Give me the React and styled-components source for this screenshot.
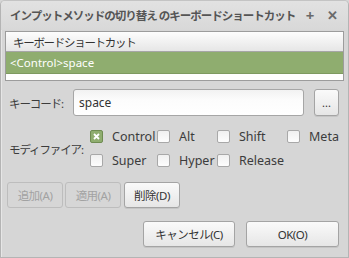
import React from "react";
import styled, { createGlobalStyle } from "styled-components";

const GlobalStyle = createGlobalStyle`
  html, body {
    margin: 0;
    padding: 0;
    background: #d6d6d6;
  }
  * {
    box-sizing: border-box;
  }
`;

const Window = styled.div`
  width: 349px;
  height: 258px;
  background: #d6d6d6;
  border: 1px solid #b4b4b4;
  border-top-color: #c4c4c4;
  border-radius: 5px 5px 0 0;
  box-shadow: inset 1px 1px 0 #e6e6e6;
  font-family: "Noto Sans", "Noto Sans CJK JP", sans-serif;
  font-size: 12px;
  color: #3c3c3c;
  display: flex;
  flex-direction: column;
`;

const TitleBar = styled.div`
  height: 29px;
  display: flex;
  align-items: center;
  padding: 0 6px 2px 9px;
  background: linear-gradient(#e2e2e2, #d8d8d8);
  border-radius: 4px 4px 0 0;
`;

const Title = styled.div`
  flex: 1;
  font-weight: bold;
  font-size: 11.5px;
  letter-spacing: -1px;
  color: #555;
  white-space: nowrap;
  overflow: hidden;
`;

const TitleButton = styled.span`
  width: 20px;
  text-align: center;
  color: #6a6a6a;
  font-weight: bold;
  font-size: ${(p) => p.size || 14}px;
  margin-left: 2px;
`;

const Body = styled.div`
  flex: 1;
  display: flex;
  flex-direction: column;
  padding: 1px 4px 0 4px;
`;

const ListBox = styled.div`
  height: 50px;
  border: 1px solid #9c9c9c;
  background: #fff;
  display: flex;
  flex-direction: column;
`;

const ListHeader = styled.div`
  height: 20px;
  display: flex;
  align-items: center;
  padding-left: 7px;
  background: linear-gradient(#fdfdfd, #e6e6e6);
  border-bottom: 1px solid #a6a6a6;
  color: #333;
  font-size: 11.5px;
  letter-spacing: -1.3px;
`;

const ListRow = styled.div`
  height: 22px;
  display: flex;
  align-items: center;
  padding-left: 4px;
  background: ${(p) => (p.selected ? "#8fad6f" : "#fff")};
  color: ${(p) => (p.selected ? "#fff" : "#333")};
  border-bottom: ${(p) => (p.selected ? "1px solid #7e9a60" : "none")};
  font-size: 11.5px;
`;

const FieldRow = styled.div`
  display: flex;
  align-items: center;
  margin-top: 8px;
  height: 27px;
`;

const Label = styled.div`
  width: 68px;
  padding-left: 4px;
  color: #3c3c3c;
  white-space: nowrap;
  font-size: 11.5px;
  letter-spacing: -1.1px;
`;

const TextInput = styled.div`
  width: 231px;
  height: 27px;
  border: 1px solid #a6a6a6;
  border-radius: 3px;
  background: linear-gradient(#f2f2f2, #fcfcfc 40%, #fff);
  display: flex;
  align-items: center;
  padding-left: 5px;
  font-size: 12px;
  color: #333;
`;

const Button = styled.button`
  font-family: inherit;
  font-size: 11.5px;
  letter-spacing: -0.5px;
  height: ${(p) => p.h || 26}px;
  width: ${(p) => p.w}px;
  border-radius: 3px;
  padding: 0;
  border: 1px solid ${(p) => (p.disabled ? "#bdbdbd" : "#a4a4a4")};
  background: ${(p) =>
    p.disabled ? "#d6d6d6" : "linear-gradient(#fafafa, #e6e6e6)"};
  color: ${(p) => (p.disabled ? "#a2a2a2" : "#333")};
  box-shadow: ${(p) => (p.disabled ? "none" : "0 1px 0 rgba(0,0,0,0.08)")};
`;

const MoreButton = styled(Button)`
  margin-left: 10px;
  font-size: 11px;
  letter-spacing: 0;
`;

const ModRow = styled.div`
  display: flex;
  align-items: center;
  margin-top: 11px;
`;

const CheckGrid = styled.div`
  display: grid;
  grid-template-columns: 67px 60px 70px 60px;
  row-gap: 5px;
  margin-left: 17px;
`;

const CheckItem = styled.label`
  display: flex;
  align-items: center;
  height: 19px;
  font-size: 12.5px;
  color: #3c3c3c;
  white-space: nowrap;
`;

const Box = styled.span`
  width: 13px;
  height: 13px;
  border-radius: 2px;
  margin-right: 9px;
  display: flex;
  align-items: center;
  justify-content: center;
  border: 1px solid ${(p) => (p.checked ? "#6f8c52" : "#a8a8a8")};
  background: ${(p) =>
    p.checked ? "#8fad6f" : "linear-gradient(#f0f0f0, #fdfdfd)"};
`;

const ActionRow = styled.div`
  display: flex;
  gap: 2px;
  margin-top: 12px;
  margin-left: 2px;
`;

const DeleteButton = styled(Button)`
  margin-left: 1px;
`;

const DialogButtons = styled.div`
  display: flex;
  justify-content: flex-end;
  gap: 11px;
  margin-top: 13px;
  padding-right: 5px;
`;

const CheckMark = () => (
  <svg width="7" height="7" viewBox="0 0 7 7">
    <path d="M1 1L6 6M6 1L1 6" stroke="#fff" strokeWidth="1.8" />
  </svg>
);

function Check({ label, checked }) {
  return (
    <CheckItem>
      <Box checked={checked}>{checked && <CheckMark />}</Box>
      {label}
    </CheckItem>
  );
}

const modifiers = [
  { label: "Control", checked: true },
  { label: "Alt" },
  { label: "Shift" },
  { label: "Meta" },
  { label: "Super" },
  { label: "Hyper" },
  { label: "Release" },
];

export default function App() {
  return (
    <>
      <GlobalStyle />
      <Window>
        <TitleBar>
          <Title>インプットメソッドの切り替え のキーボードショートカット</Title>
          <TitleButton size={15}>+</TitleButton>
          <TitleButton size={13}>✕</TitleButton>
        </TitleBar>
        <Body>
          <ListBox>
            <ListHeader>キーボードショートカット</ListHeader>
            <ListRow selected>&lt;Control&gt;space</ListRow>
          </ListBox>

          <FieldRow>
            <Label>キーコード:</Label>
            <TextInput>space</TextInput>
            <MoreButton w={25} h={27}>
              ...
            </MoreButton>
          </FieldRow>

          <ModRow>
            <Label>モディファイア:</Label>
            <CheckGrid>
              {modifiers.map((m) => (
                <Check key={m.label} label={m.label} checked={m.checked} />
              ))}
            </CheckGrid>
          </ModRow>

          <ActionRow>
            <Button w={56} disabled>
              追加(A)
            </Button>
            <Button w={56} disabled>
              適用(A)
            </Button>
            <DeleteButton w={56}>削除(D)</DeleteButton>
          </ActionRow>

          <DialogButtons>
            <Button w={92}>キャンセル(C)</Button>
            <Button w={93}>OK(O)</Button>
          </DialogButtons>
        </Body>
      </Window>
    </>
  );
}
